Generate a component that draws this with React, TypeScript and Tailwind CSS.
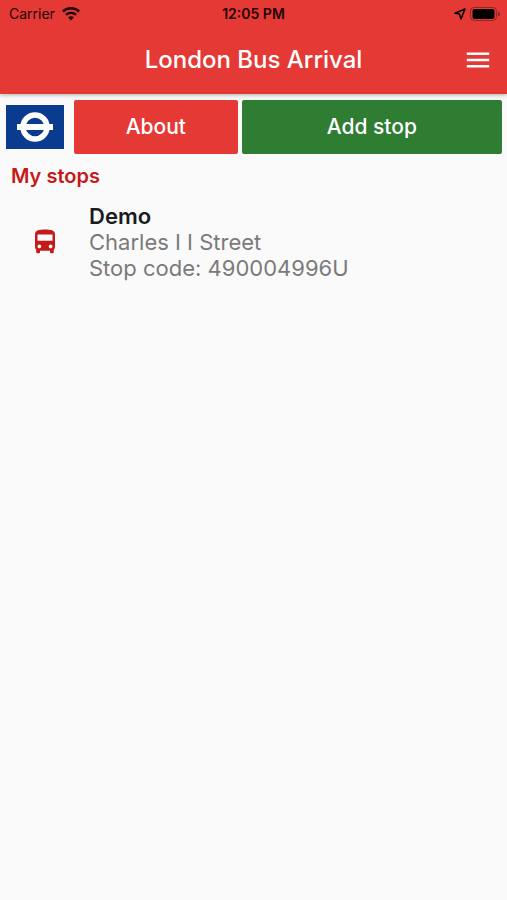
import type { ReactNode } from "react";
import { clsx } from "clsx";
import { MdDirectionsBus, MdMenu } from "react-icons/md";

type Stop = {
  name: string;
  street: string;
  code: string;
};

const stops: Stop[] = [{ name: "Demo", street: "Charles I I Street", code: "490004996U" }];

function WifiIcon() {
  return (
    <svg viewBox="0 0 18 14" className="h-[14px] w-[18px]" fill="currentColor" aria-hidden="true">
      <path d="M9 0C5.600 0 2.400 1.300 0 3.600L1.700 5.400A10.500 10.500 0 0 1 16.300 5.400L18 3.600C15.600 1.300 12.400 0 9 0Z" />
      <path d="M9 4.700C6.800 4.700 4.700 5.500 3.100 7L4.800 8.700A6 6 0 0 1 13.200 8.700L14.900 7C13.300 5.500 11.200 4.700 9 4.700Z" />
      <path d="M9 9.200C7.900 9.200 6.900 9.600 6.100 10.300L9 13.500L11.900 10.300C11.100 9.600 10.100 9.200 9 9.200Z" />
    </svg>
  );
}

function LocationIcon() {
  return (
    <svg viewBox="0 0 12 12" className="size-3" fill="none" stroke="currentColor" strokeWidth="1.5" strokeLinejoin="round" aria-hidden="true">
      <path d="M11 1L1 5.300L5.500 6L7 11Z" />
    </svg>
  );
}

function BatteryIcon() {
  return (
    <svg viewBox="0 0 30 14" className="h-[14px] w-[30px]" aria-hidden="true">
      <rect x="0.500" y="0.500" width="26" height="13" rx="3.500" fill="none" stroke="#000" strokeOpacity="0.35" />
      <rect x="2.500" y="2" width="22" height="10" rx="2" />
      <path d="M28 4.500C29.300 5 30 6 30 7S29.300 9 28 9.500Z" fillOpacity="0.4" />
    </svg>
  );
}

function Roundel() {
  return (
    <svg viewBox="0 0 58 44" className="h-11 w-[58px] shrink-0" role="img" aria-label="Roundel">
      <rect width="58" height="44" fill="#0b3b8f" />
      <circle cx="29" cy="22" r="12" fill="none" stroke="#fff" strokeWidth="5.500" />
      <rect x="11" y="19" width="36" height="6" fill="#fff" />
    </svg>
  );
}

function ActionButton({ className, children }: { className: string; children: ReactNode }) {
  return (
    <button type="button" className={clsx("h-[54px] rounded-xs text-[21px] font-medium text-white", className)}>
      {children}
    </button>
  );
}

function StatusBar() {
  return (
    <div className="grid h-7 grid-cols-3 items-center px-[7px] text-sm text-[#200605]">
      <div className="flex items-center gap-[7px] pl-0.5">
        Carrier
        <WifiIcon />
      </div>
      <div className="text-center font-semibold">12:05 PM</div>
      <div className="flex items-center justify-end gap-1 text-black">
        <LocationIcon />
        <BatteryIcon />
      </div>
    </div>
  );
}

function StopRow({ stop }: { stop: Stop }) {
  return (
    <li className="flex items-center px-[30px]">
      <MdDirectionsBus size={30} className="shrink-0 text-[#c41a1a]" />
      <div className="ml-[29px] text-[22px] leading-[26px] text-[#7a7a7a]">
        <div className="font-semibold text-[#1c1c1c]">{stop.name}</div>
        <div>{stop.street}</div>
        <div>Stop code: {stop.code}</div>
      </div>
    </li>
  );
}

export default function App() {
  return (
    <div className="min-h-screen bg-[#fafafa] font-['Inter','Liberation_Sans',sans-serif]">
      <header className="relative bg-[#e53935] pb-0.5 shadow-[0_1px_4px_rgba(0,0,0,0.3)]">
        <StatusBar />
        <div className="grid h-16 grid-cols-[30px_1fr_30px] items-center px-[14px]">
          <h1 className="col-start-2 text-center text-2xl font-medium text-white">London Bus Arrival</h1>
          <button type="button" aria-label="Menu" className="text-white">
            <MdMenu size={30} />
          </button>
        </div>
      </header>
      <main>
        <div className="flex items-center pt-1.5 pr-[5px] pl-1.5">
          <Roundel />
          <ActionButton className="ml-2.5 w-[33%] bg-[#e53935]">About</ActionButton>
          <ActionButton className="ml-1 flex-1 bg-[#2e7d32]">Add stop</ActionButton>
        </div>
        <h2 className="px-[11px] pt-2 text-xl font-semibold text-[#c41a1a]">My stops</h2>
        <ul className="pt-[13px]">
          {stops.map((stop) => (
            <StopRow key={stop.code} stop={stop} />
          ))}
        </ul>
      </main>
    </div>
  );
}
